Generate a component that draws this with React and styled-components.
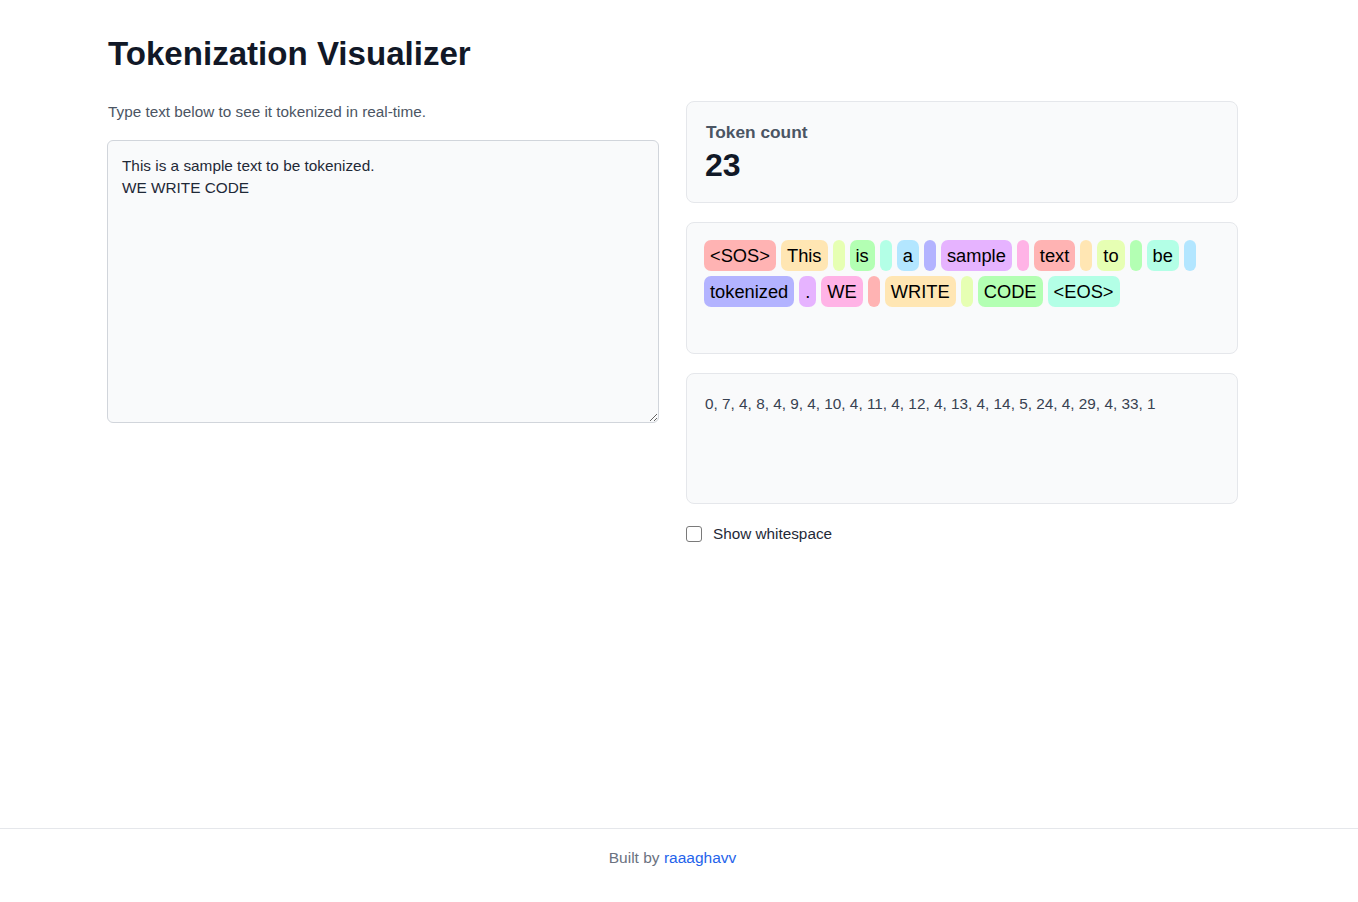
import React, { useState, useMemo } from "react";
import styled, { createGlobalStyle } from "styled-components";

const GlobalStyle = createGlobalStyle`
  html, body { margin: 0; padding: 0; background: #ffffff; }
  body {
    font-family: "Liberation Sans", Arial, Helvetica, sans-serif;
    color: #111827;
  }
  * { box-sizing: border-box; }
`;

const Page = styled.div`
  min-height: 100vh;
  display: flex;
  flex-direction: column;
`;

const Main = styled.main`
  flex: 1;
  padding-top: 34px;
`;

const Container = styled.div`
  width: 1131px;
  margin-left: 107px;
`;

const Title = styled.h1`
  margin: 0 0 27px 1px;
  font-size: 33.1px;
  line-height: 40px;
  font-weight: 700;
  color: #111827;
`;

const Grid = styled.div`
  display: grid;
  grid-template-columns: 552px 552px;
  column-gap: 27px;
  align-items: start;
`;

const LeftCol = styled.div`
  display: flex;
  flex-direction: column;
`;

const Description = styled.p`
  margin: 0 0 18px 1px;
  font-size: 15.3px;
  line-height: 21px;
  color: #4b5563;
`;

const TextArea = styled.textarea`
  display: block;
  width: 552px;
  height: 283px;
  padding: 14px;
  border: 1px solid #d1d5db;
  border-radius: 6px;
  background: #f9fafb;
  color: #1f2937;
  font-family: "Liberation Sans", Arial, Helvetica, sans-serif;
  font-size: 15.35px;
  line-height: 22px;
  resize: vertical;
  outline: none;
`;

const RightCol = styled.div`
  display: flex;
  flex-direction: column;
  gap: 19px;
`;

const Card = styled.div`
  background: #f9fafb;
  border: 1px solid #e5e7eb;
  border-radius: 8px;
  padding: ${(p) => p.$pad || "17px"};
  min-height: ${(p) => p.$minH || "auto"};
`;

const CountLabel = styled.div`
  font-size: 17.3px;
  line-height: 20px;
  font-weight: 700;
  color: #4b5563;
  margin-left: 1px;
  margin-bottom: 5px;
`;

const CountValue = styled.div`
  font-size: 32px;
  line-height: 36px;
  font-weight: 700;
  color: #111827;
`;

const Chips = styled.div`
  display: flex;
  flex-wrap: wrap;
  align-content: flex-start;
  gap: 5px 5px;
`;

const Chip = styled.span`
  display: inline-block;
  height: 31px;
  padding: 2px 6px;
  min-width: 12px;
  border-radius: 7px;
  background: ${(p) => p.$bg};
  color: #000000;
  font-size: 18.3px;
  line-height: 27px;
  white-space: pre;
`;

const Ids = styled.div`
  font-size: 15.33px;
  line-height: 21px;
  color: #374151;
`;

const CheckRow = styled.label`
  display: flex;
  align-items: center;
  gap: 11px;
  font-size: 15.3px;
  line-height: 21px;
  color: #1f2937;
  cursor: pointer;
`;

const Checkbox = styled.input`
  appearance: none;
  -webkit-appearance: none;
  margin: 0;
  width: 16px;
  height: 16px;
  border: 1.5px solid #7a7a7a;
  border-radius: 3px;
  background: #ffffff;
  &:checked {
    background: #2563eb;
    border-color: #2563eb;
  }
`;

const Footer = styled.footer`
  border-top: 1px solid #e5e7eb;
  padding: 17px 13px 32px 0;
  text-align: center;
  font-size: 15.5px;
  line-height: 24px;
  color: #6b7280;
`;

const FooterLink = styled.a`
  color: #2563eb;
  text-decoration: none;
`;

const COLORS = [
  "#ffb3b3",
  "#ffe6b3",
  "#e6ffb3",
  "#b3ffb3",
  "#b3ffe6",
  "#b3e6ff",
  "#b3b3ff",
  "#e6b3ff",
  "#ffb3e6",
];

const TOKENS = [
  "<SOS>", "This", " ", "is", " ", "a", " ", "sample", " ", "text", " ", "to",
  " ", "be", " ", "tokenized", ".", "WE", " ", "WRITE", " ", "CODE", "<EOS>",
];

const IDS = [0, 7, 4, 8, 4, 9, 4, 10, 4, 11, 4, 12, 4, 13, 4, 14, 5, 24, 4, 29, 4, 33, 1];

export default function App() {
  const [text, setText] = useState("This is a sample text to be tokenized.\nWE WRITE CODE");
  const [showWs, setShowWs] = useState(false);

  const tokens = useMemo(() => TOKENS, []);

  return (
    <Page>
      <GlobalStyle />
      <Main>
        <Container>
          <Title>Tokenization Visualizer</Title>
          <Grid>
            <LeftCol>
              <Description>Type text below to see it tokenized in real-time.</Description>
              <TextArea value={text} onChange={(e) => setText(e.target.value)} />
            </LeftCol>
            <RightCol>
              <Card $pad="20px 18px 19px">
                <CountLabel>Token count</CountLabel>
                <CountValue>{tokens.length}</CountValue>
              </Card>
              <Card $pad="17px" $minH="131.5px">
                <Chips>
                  {tokens.map((t, i) => (
                    <Chip key={i} $bg={COLORS[i % COLORS.length]}>
                      {t === " " ? (showWs ? "·" : "") : t}
                    </Chip>
                  ))}
                </Chips>
              </Card>
              <Card $pad="19px 18px" $minH="131.5px">
                <Ids>{IDS.join(", ")}</Ids>
              </Card>
              <CheckRow>
                <Checkbox
                  type="checkbox"
                  checked={showWs}
                  onChange={(e) => setShowWs(e.target.checked)}
                />
                Show whitespace
              </CheckRow>
            </RightCol>
          </Grid>
        </Container>
      </Main>
      <Footer>
        Built by <FooterLink href="#">raaaghavv</FooterLink>
      </Footer>
    </Page>
  );
}
